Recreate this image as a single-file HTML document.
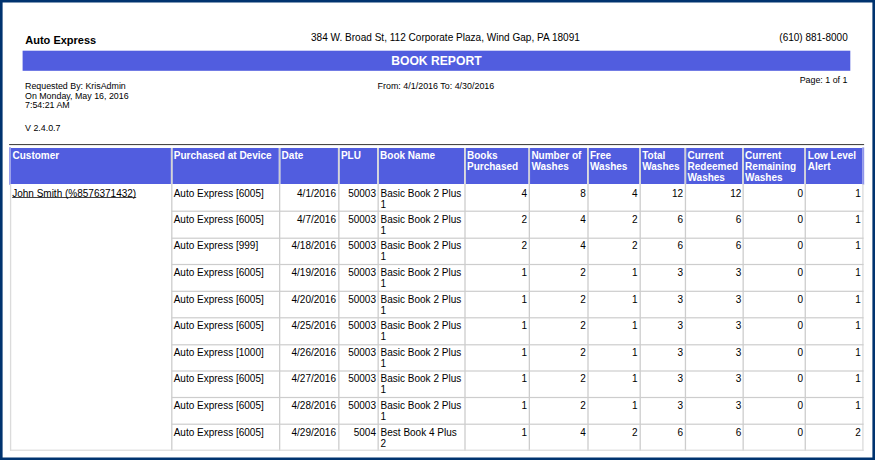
<!DOCTYPE html>
<html><head><meta charset="utf-8"><title>Book Report</title>
<style>
html,body{margin:0;padding:0;}
body{width:875px;height:460px;overflow:hidden;background:#fff;font-family:"Liberation Sans",sans-serif;color:#000;position:relative;}
svg{position:absolute;left:0;top:0;}
.t{position:absolute;white-space:nowrap;line-height:1;}
.hc{position:absolute;color:#fff;font-weight:bold;font-size:10px;line-height:10.8px;white-space:nowrap;}
.c{position:absolute;font-size:10px;line-height:10.8px;white-space:nowrap;}
.r{text-align:right;}
</style></head><body>
<svg width="875" height="460" viewBox="0 0 875 460">
<path fill="#00336f" fill-rule="evenodd" d="M0 0H875V460H0Z M2.6 2.6V457.4H872.4V2.6Z"/>
<rect x="22.6" y="50.7" width="827.7" height="20.1" fill="#515ddf"/>
<rect x="9.1" y="144" width="855" height="1.1" fill="#474747"/>
<rect x="10.70" y="148.00" width="160.15" height="36.00" fill="#515ddf"/>
<rect x="172.50" y="148.00" width="106.20" height="36.00" fill="#515ddf"/>
<rect x="280.35" y="148.00" width="57.55" height="36.00" fill="#515ddf"/>
<rect x="339.55" y="148.00" width="37.65" height="36.00" fill="#515ddf"/>
<rect x="378.85" y="148.00" width="85.20" height="36.00" fill="#515ddf"/>
<rect x="465.70" y="148.00" width="62.70" height="36.00" fill="#515ddf"/>
<rect x="530.05" y="148.00" width="57.00" height="36.00" fill="#515ddf"/>
<rect x="588.70" y="148.00" width="50.55" height="36.00" fill="#515ddf"/>
<rect x="640.90" y="148.00" width="43.60" height="36.00" fill="#515ddf"/>
<rect x="686.15" y="148.00" width="56.05" height="36.00" fill="#515ddf"/>
<rect x="743.85" y="148.00" width="60.45" height="36.00" fill="#515ddf"/>
<rect x="805.95" y="148.00" width="56.35" height="36.00" fill="#515ddf"/>
<rect x="9.1" y="147.2" width="1.7" height="37.6" fill="#9096ea"/>
<rect x="862.2" y="147.4" width="2.0" height="37.3" fill="#9096ea"/>
<g fill="#cdcdcd">
<rect x="9.95" y="184.00" width="1.30" height="266.85" fill="#dbdbdb"/>
<rect x="171.15" y="148.00" width="1.30" height="302.85"/>
<rect x="279.00" y="148.00" width="1.30" height="302.85"/>
<rect x="338.20" y="148.00" width="1.30" height="302.85"/>
<rect x="377.50" y="148.00" width="1.30" height="302.85"/>
<rect x="464.35" y="148.00" width="1.30" height="302.85"/>
<rect x="528.70" y="148.00" width="1.30" height="302.85"/>
<rect x="587.35" y="148.00" width="1.30" height="302.85"/>
<rect x="639.55" y="148.00" width="1.30" height="302.85"/>
<rect x="684.80" y="148.00" width="1.30" height="302.85"/>
<rect x="742.50" y="148.00" width="1.30" height="302.85"/>
<rect x="804.60" y="148.00" width="1.30" height="302.85"/>
<rect x="862.25" y="184.00" width="1.30" height="266.85" fill="#dbdbdb"/>
<rect x="171.80" y="210.60" width="691.75" height="1.20"/>
<rect x="171.80" y="237.60" width="691.75" height="1.20"/>
<rect x="171.80" y="263.90" width="691.75" height="1.20"/>
<rect x="171.80" y="290.70" width="691.75" height="1.20"/>
<rect x="171.80" y="317.20" width="691.75" height="1.20"/>
<rect x="171.80" y="344.20" width="691.75" height="1.20"/>
<rect x="171.80" y="370.40" width="691.75" height="1.20"/>
<rect x="171.80" y="396.90" width="691.75" height="1.20"/>
<rect x="171.80" y="423.60" width="691.75" height="1.20"/>
<rect x="9.95" y="449.60" width="853.60" height="1.20" fill="#dbdbdb"/>
</g>
<rect x="12.2" y="197.15" width="124" height="0.85" fill="#222"/>
</svg>
<div class="t" style="left:25.3px;top:35px;font-size:11px;font-weight:bold;">Auto Express</div>
<div class="t" style="left:311px;top:33px;font-size:10.05px;">384 W. Broad St, 112 Corporate Plaza, Wind Gap, PA 18091</div>
<div class="t" style="right:27.3px;top:33px;font-size:10px;">(610) 881-8000</div>
<div class="t" style="left:391.2px;top:55px;font-size:12.15px;font-weight:bold;color:#fff;">BOOK REPORT</div>
<div class="t" style="left:25px;top:82px;font-size:8.86px;line-height:9.7px;white-space:pre;">Requested By: KrisAdmin
On Monday, May 16, 2016
7:54:21 AM</div>
<div class="t" style="left:377.6px;top:82px;font-size:8.92px;">From: 4/1/2016 To: 4/30/2016</div>
<div class="t" style="right:27.5px;top:76px;font-size:8.9px;">Page: 1 of 1</div>
<div class="t" style="left:25px;top:124px;font-size:8.9px;">V 2.4.0.7</div>
<div class="hc" style="left:12.5px;top:151px;">Customer</div>
<div class="hc" style="left:173.8px;top:151px;">Purchased at Device</div>
<div class="hc" style="left:281.6px;top:151px;">Date</div>
<div class="hc" style="left:340.9px;top:151px;">PLU</div>
<div class="hc" style="left:380.1px;top:151px;">Book Name</div>
<div class="hc" style="left:467.0px;top:151px;">Books<br>Purchased</div>
<div class="hc" style="left:531.4px;top:151px;">Number of<br>Washes</div>
<div class="hc" style="left:590.0px;top:151px;">Free<br>Washes</div>
<div class="hc" style="left:642.2px;top:151px;">Total<br>Washes</div>
<div class="hc" style="left:687.5px;top:151px;">Current<br>Redeemed<br>Washes</div>
<div class="hc" style="left:745.1px;top:151px;">Current<br>Remaining<br>Washes</div>
<div class="hc" style="left:807.8px;top:151px;">Low Level<br>Alert</div>
<div class="c" style="left:12.2px;top:189px;">John Smith (%8576371432)</div>
<div class="c" style="left:173.7px;top:189px;">Auto Express [6005]</div>
<div class="c r" style="left:279.6px;width:56.4px;top:189px;">4/1/2016</div>
<div class="c r" style="left:338.9px;width:37.1px;top:189px;">50003</div>
<div class="c" style="left:380.6px;top:189px;">Basic Book 2 Plus<br>1</div>
<div class="c r" style="left:465.0px;width:62.1px;top:189px;">4</div>
<div class="c r" style="left:529.4px;width:56.3px;top:189px;">8</div>
<div class="c r" style="left:588.0px;width:49.5px;top:189px;">4</div>
<div class="c r" style="left:640.2px;width:42.9px;top:189px;">12</div>
<div class="c r" style="left:685.5px;width:55.8px;top:189px;">12</div>
<div class="c r" style="left:743.1px;width:60.0px;top:189px;">0</div>
<div class="c r" style="left:805.2px;width:55.6px;top:189px;">1</div>
<div class="c" style="left:173.7px;top:215px;">Auto Express [6005]</div>
<div class="c r" style="left:279.6px;width:56.4px;top:215px;">4/7/2016</div>
<div class="c r" style="left:338.9px;width:37.1px;top:215px;">50003</div>
<div class="c" style="left:380.6px;top:215px;">Basic Book 2 Plus<br>1</div>
<div class="c r" style="left:465.0px;width:62.1px;top:215px;">2</div>
<div class="c r" style="left:529.4px;width:56.3px;top:215px;">4</div>
<div class="c r" style="left:588.0px;width:49.5px;top:215px;">2</div>
<div class="c r" style="left:640.2px;width:42.9px;top:215px;">6</div>
<div class="c r" style="left:685.5px;width:55.8px;top:215px;">6</div>
<div class="c r" style="left:743.1px;width:60.0px;top:215px;">0</div>
<div class="c r" style="left:805.2px;width:55.6px;top:215px;">1</div>
<div class="c" style="left:173.7px;top:241px;">Auto Express [999]</div>
<div class="c r" style="left:279.6px;width:56.4px;top:241px;">4/18/2016</div>
<div class="c r" style="left:338.9px;width:37.1px;top:241px;">50003</div>
<div class="c" style="left:380.6px;top:241px;">Basic Book 2 Plus<br>1</div>
<div class="c r" style="left:465.0px;width:62.1px;top:241px;">2</div>
<div class="c r" style="left:529.4px;width:56.3px;top:241px;">4</div>
<div class="c r" style="left:588.0px;width:49.5px;top:241px;">2</div>
<div class="c r" style="left:640.2px;width:42.9px;top:241px;">6</div>
<div class="c r" style="left:685.5px;width:55.8px;top:241px;">6</div>
<div class="c r" style="left:743.1px;width:60.0px;top:241px;">0</div>
<div class="c r" style="left:805.2px;width:55.6px;top:241px;">1</div>
<div class="c" style="left:173.7px;top:268px;">Auto Express [6005]</div>
<div class="c r" style="left:279.6px;width:56.4px;top:268px;">4/19/2016</div>
<div class="c r" style="left:338.9px;width:37.1px;top:268px;">50003</div>
<div class="c" style="left:380.6px;top:268px;">Basic Book 2 Plus<br>1</div>
<div class="c r" style="left:465.0px;width:62.1px;top:268px;">1</div>
<div class="c r" style="left:529.4px;width:56.3px;top:268px;">2</div>
<div class="c r" style="left:588.0px;width:49.5px;top:268px;">1</div>
<div class="c r" style="left:640.2px;width:42.9px;top:268px;">3</div>
<div class="c r" style="left:685.5px;width:55.8px;top:268px;">3</div>
<div class="c r" style="left:743.1px;width:60.0px;top:268px;">0</div>
<div class="c r" style="left:805.2px;width:55.6px;top:268px;">1</div>
<div class="c" style="left:173.7px;top:295px;">Auto Express [6005]</div>
<div class="c r" style="left:279.6px;width:56.4px;top:295px;">4/20/2016</div>
<div class="c r" style="left:338.9px;width:37.1px;top:295px;">50003</div>
<div class="c" style="left:380.6px;top:295px;">Basic Book 2 Plus<br>1</div>
<div class="c r" style="left:465.0px;width:62.1px;top:295px;">1</div>
<div class="c r" style="left:529.4px;width:56.3px;top:295px;">2</div>
<div class="c r" style="left:588.0px;width:49.5px;top:295px;">1</div>
<div class="c r" style="left:640.2px;width:42.9px;top:295px;">3</div>
<div class="c r" style="left:685.5px;width:55.8px;top:295px;">3</div>
<div class="c r" style="left:743.1px;width:60.0px;top:295px;">0</div>
<div class="c r" style="left:805.2px;width:55.6px;top:295px;">1</div>
<div class="c" style="left:173.7px;top:321px;">Auto Express [6005]</div>
<div class="c r" style="left:279.6px;width:56.4px;top:321px;">4/25/2016</div>
<div class="c r" style="left:338.9px;width:37.1px;top:321px;">50003</div>
<div class="c" style="left:380.6px;top:321px;">Basic Book 2 Plus<br>1</div>
<div class="c r" style="left:465.0px;width:62.1px;top:321px;">1</div>
<div class="c r" style="left:529.4px;width:56.3px;top:321px;">2</div>
<div class="c r" style="left:588.0px;width:49.5px;top:321px;">1</div>
<div class="c r" style="left:640.2px;width:42.9px;top:321px;">3</div>
<div class="c r" style="left:685.5px;width:55.8px;top:321px;">3</div>
<div class="c r" style="left:743.1px;width:60.0px;top:321px;">0</div>
<div class="c r" style="left:805.2px;width:55.6px;top:321px;">1</div>
<div class="c" style="left:173.7px;top:348px;">Auto Express [1000]</div>
<div class="c r" style="left:279.6px;width:56.4px;top:348px;">4/26/2016</div>
<div class="c r" style="left:338.9px;width:37.1px;top:348px;">50003</div>
<div class="c" style="left:380.6px;top:348px;">Basic Book 2 Plus<br>1</div>
<div class="c r" style="left:465.0px;width:62.1px;top:348px;">1</div>
<div class="c r" style="left:529.4px;width:56.3px;top:348px;">2</div>
<div class="c r" style="left:588.0px;width:49.5px;top:348px;">1</div>
<div class="c r" style="left:640.2px;width:42.9px;top:348px;">3</div>
<div class="c r" style="left:685.5px;width:55.8px;top:348px;">3</div>
<div class="c r" style="left:743.1px;width:60.0px;top:348px;">0</div>
<div class="c r" style="left:805.2px;width:55.6px;top:348px;">1</div>
<div class="c" style="left:173.7px;top:374px;">Auto Express [6005]</div>
<div class="c r" style="left:279.6px;width:56.4px;top:374px;">4/27/2016</div>
<div class="c r" style="left:338.9px;width:37.1px;top:374px;">50003</div>
<div class="c" style="left:380.6px;top:374px;">Basic Book 2 Plus<br>1</div>
<div class="c r" style="left:465.0px;width:62.1px;top:374px;">1</div>
<div class="c r" style="left:529.4px;width:56.3px;top:374px;">2</div>
<div class="c r" style="left:588.0px;width:49.5px;top:374px;">1</div>
<div class="c r" style="left:640.2px;width:42.9px;top:374px;">3</div>
<div class="c r" style="left:685.5px;width:55.8px;top:374px;">3</div>
<div class="c r" style="left:743.1px;width:60.0px;top:374px;">0</div>
<div class="c r" style="left:805.2px;width:55.6px;top:374px;">1</div>
<div class="c" style="left:173.7px;top:401px;">Auto Express [6005]</div>
<div class="c r" style="left:279.6px;width:56.4px;top:401px;">4/28/2016</div>
<div class="c r" style="left:338.9px;width:37.1px;top:401px;">50003</div>
<div class="c" style="left:380.6px;top:401px;">Basic Book 2 Plus<br>1</div>
<div class="c r" style="left:465.0px;width:62.1px;top:401px;">1</div>
<div class="c r" style="left:529.4px;width:56.3px;top:401px;">2</div>
<div class="c r" style="left:588.0px;width:49.5px;top:401px;">1</div>
<div class="c r" style="left:640.2px;width:42.9px;top:401px;">3</div>
<div class="c r" style="left:685.5px;width:55.8px;top:401px;">3</div>
<div class="c r" style="left:743.1px;width:60.0px;top:401px;">0</div>
<div class="c r" style="left:805.2px;width:55.6px;top:401px;">1</div>
<div class="c" style="left:173.7px;top:428px;">Auto Express [6005]</div>
<div class="c r" style="left:279.6px;width:56.4px;top:428px;">4/29/2016</div>
<div class="c r" style="left:338.9px;width:37.1px;top:428px;">5004</div>
<div class="c" style="left:380.6px;top:428px;">Best Book 4 Plus<br>2</div>
<div class="c r" style="left:465.0px;width:62.1px;top:428px;">1</div>
<div class="c r" style="left:529.4px;width:56.3px;top:428px;">4</div>
<div class="c r" style="left:588.0px;width:49.5px;top:428px;">2</div>
<div class="c r" style="left:640.2px;width:42.9px;top:428px;">6</div>
<div class="c r" style="left:685.5px;width:55.8px;top:428px;">6</div>
<div class="c r" style="left:743.1px;width:60.0px;top:428px;">0</div>
<div class="c r" style="left:805.2px;width:55.6px;top:428px;">2</div>
</body></html>
